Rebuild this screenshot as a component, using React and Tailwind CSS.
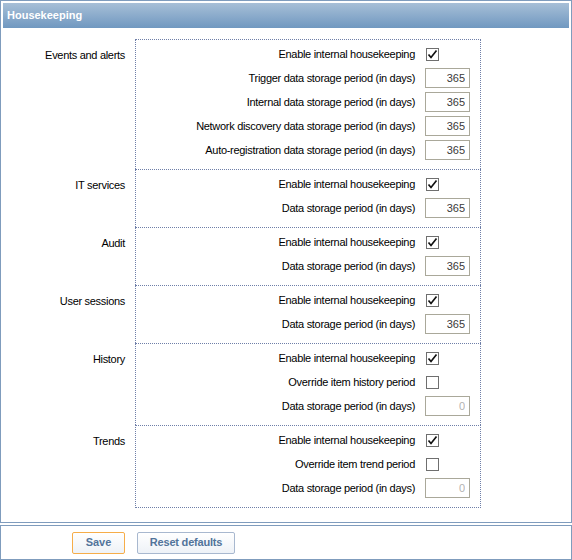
import { useState } from 'react';

const sections = [
  {
    title: 'Events and alerts',
    rows: [
      { label: 'Enable internal housekeeping', type: 'check', on: true },
      { label: 'Trigger data storage period (in days)', type: 'input', value: '365' },
      { label: 'Internal data storage period (in days)', type: 'input', value: '365' },
      { label: 'Network discovery data storage period (in days)', type: 'input', value: '365' },
      { label: 'Auto-registration data storage period (in days)', type: 'input', value: '365' },
    ],
  },
  {
    title: 'IT services',
    rows: [
      { label: 'Enable internal housekeeping', type: 'check', on: true },
      { label: 'Data storage period (in days)', type: 'input', value: '365' },
    ],
  },
  {
    title: 'Audit',
    rows: [
      { label: 'Enable internal housekeeping', type: 'check', on: true },
      { label: 'Data storage period (in days)', type: 'input', value: '365' },
    ],
  },
  {
    title: 'User sessions',
    rows: [
      { label: 'Enable internal housekeeping', type: 'check', on: true },
      { label: 'Data storage period (in days)', type: 'input', value: '365' },
    ],
  },
  {
    title: 'History',
    rows: [
      { label: 'Enable internal housekeeping', type: 'check', on: true },
      { label: 'Override item history period', type: 'check', on: false },
      { label: 'Data storage period (in days)', type: 'input', value: '0', disabled: true },
    ],
  },
  {
    title: 'Trends',
    rows: [
      { label: 'Enable internal housekeeping', type: 'check', on: true },
      { label: 'Override item trend period', type: 'check', on: false },
      { label: 'Data storage period (in days)', type: 'input', value: '0', disabled: true },
    ],
  },
];

const CheckBox = ({ on }) => {
  const [checked, setChecked] = useState(on);
  return (
    <div
      onClick={() => setChecked(!checked)}
      className="w-[13px] h-[13px] ml-[1px] border border-[#6f6f6f] bg-white flex items-center justify-center"
    >
      {checked && (
        <svg width="11" height="11" viewBox="0 0 11 11">
          <path d="M1.5 5.5 L4 8.5 L9.5 1.5" fill="none" stroke="#111" strokeWidth="1.7" />
        </svg>
      )}
    </div>
  );
};

const Row = ({ row }) => (
  <div className="h-[24px] flex items-center">
    <div className="flex-1 text-right pr-[10px] text-black tracking-[-0.3px]">{row.label}</div>
    <div className="w-[55px]">
      {row.type === 'check' ? (
        <CheckBox on={row.on} />
      ) : (
        <input
          defaultValue={row.value}
          disabled={row.disabled}
          className={`w-[45px] h-[20px] border border-[#aaa89a] bg-white text-right pr-[4px] text-[11px] outline-none ${row.disabled ? 'text-[#b3b3b3]' : 'text-[#3a3a3a]'}`}
        />
      )}
    </div>
  </div>
);

export default function App() {
  return (
    <div className="w-[572px] h-[560px] bg-white text-[11px] font-['Liberation_Sans',Arial,sans-serif]">
      <div className="border border-[#7f9cbd] p-[2px] h-[523px] flex flex-col">
        <div className="h-[25px] bg-gradient-to-b from-[#a7bfd7] to-[#7098c0] text-white font-bold flex items-center pl-[4px] text-[11px]">
          Housekeeping
        </div>
        <div className="pt-[11px]">
          {sections.map((s, i) => (
            <div key={s.title} className="flex">
              <div className="w-[122px] text-right pt-[8px] text-black tracking-[-0.3px]">{s.title}</div>
              <div
                className={`ml-[10px] w-[346px] border-x border-t border-dotted border-[#6f7fa8] pt-[2px] pb-[7px] ${i === sections.length - 1 ? 'border-b' : ''}`}
              >
                {s.rows.map((r, j) => (
                  <Row key={j} row={r} />
                ))}
              </div>
            </div>
          ))}
        </div>
      </div>
      <div className="mt-[2px] h-[35px] border border-[#7f9cbd] flex items-center pl-[71px] gap-[12px]">
        <button className="w-[53px] h-[22px] rounded-[2px] border border-[#f6ad49] bg-gradient-to-b from-[#ffffff] to-[#eef2f7] text-[#52749a] font-bold text-[11px]">
          Save
        </button>
        <button className="w-[98px] h-[22px] rounded-[2px] border border-[#a8b8cf] bg-gradient-to-b from-[#ffffff] to-[#eef2f7] text-[#52749a] font-bold text-[11px] tracking-[-0.2px]">
          Reset defaults
        </button>
      </div>
    </div>
  );
}
